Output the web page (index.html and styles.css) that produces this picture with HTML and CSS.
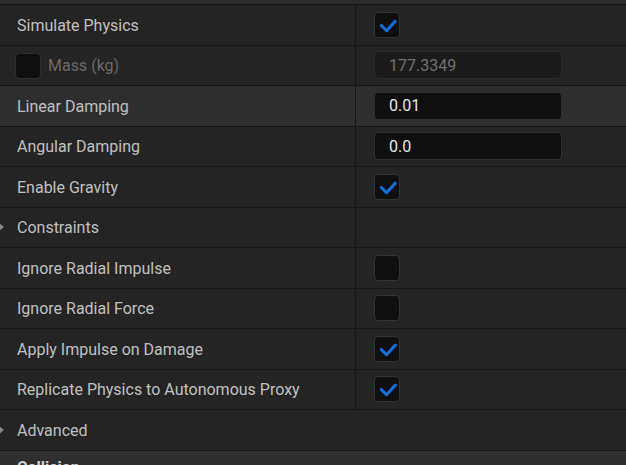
FILE: index.html
```html
<!DOCTYPE html>
<html>
<head>
<meta charset="utf-8">
<link rel="stylesheet" href="styles.css">
</head>
<body>
<div class="panel">
  <div class="topstrip"></div>
  <div class="row">
    <div class="name">Simulate Physics</div>
    <div class="value"><span class="cb checked"><svg viewBox="0 0 25 25"><polyline points="6.5,13 12,18.5 21,8.5"/></svg></span></div>
  </div>
  <div class="row">
    <div class="name disabled"><span class="cb small"></span>Mass (kg)</div>
    <div class="value"><span class="input dim">177.3349</span></div>
  </div>
  <div class="row hover">
    <div class="name">Linear Damping</div>
    <div class="value"><span class="input">0.01</span></div>
  </div>
  <div class="row">
    <div class="name">Angular Damping</div>
    <div class="value"><span class="input">0.0</span></div>
  </div>
  <div class="row">
    <div class="name">Enable Gravity</div>
    <div class="value"><span class="cb checked"><svg viewBox="0 0 25 25"><polyline points="6.5,13 12,18.5 21,8.5"/></svg></span></div>
  </div>
  <div class="row">
    <div class="name"><span class="arrow"></span>Constraints</div>
    <div class="value"></div>
  </div>
  <div class="row">
    <div class="name">Ignore Radial Impulse</div>
    <div class="value"><span class="cb"></span></div>
  </div>
  <div class="row">
    <div class="name">Ignore Radial Force</div>
    <div class="value"><span class="cb"></span></div>
  </div>
  <div class="row">
    <div class="name">Apply Impulse on Damage</div>
    <div class="value"><span class="cb checked"><svg viewBox="0 0 25 25"><polyline points="6.5,13 12,18.5 21,8.5"/></svg></span></div>
  </div>
  <div class="row">
    <div class="name">Replicate Physics to Autonomous Proxy</div>
    <div class="value"><span class="cb checked"><svg viewBox="0 0 25 25"><polyline points="6.5,13 12,18.5 21,8.5"/></svg></span></div>
  </div>
  <div class="row full">
    <div class="name"><span class="arrow"></span>Advanced</div>
  </div>
  <div class="category">Collision</div>
</div>
</body>
</html>
```
FILE: styles.css
```css
html, body {
  margin: 0;
  padding: 0;
  background: #242424;
  overflow: hidden;
}
.panel {
  width: 626px;
  height: 465px;
  overflow: hidden;
  font-family: Roboto, "Liberation Sans", sans-serif;
  font-size: 16px;
  color: #c0c0c0;
}
.topstrip {
  height: 4px;
  background: #2b2b2b;
  border-bottom: 1px solid #151515;
}
.row {
  box-sizing: border-box;
  height: 40.5px;
  display: flex;
  background: #242424;
  border-bottom: 1px solid #171717;
}
.row.hover {
  background: #2e2e2e;
}
.name {
  width: 356px;
  flex: none;
  box-sizing: border-box;
  padding-left: 17px;
  padding-top: 1px;
  display: flex;
  align-items: center;
  position: relative;
  border-right: 1px solid #171717;
}
.row.full .name {
  border-right: none;
}
.name.disabled {
  padding-left: 15px;
  color: #6a6a6a;
}
.value {
  flex: 1;
  display: flex;
  align-items: center;
  padding-left: 18px;
}
.cb {
  box-sizing: border-box;
  width: 26px;
  height: 26px;
  background: #0f0f0f;
  border: 1px solid #333333;
  border-radius: 4px;
  display: inline-flex;
}
.cb svg {
  width: 24px;
  height: 24px;
}
.cb polyline {
  fill: none;
  stroke: #0b70e0;
  stroke-width: 3.2;
  stroke-linecap: round;
  stroke-linejoin: round;
}
.cb.small {
  margin-right: 7px;
  border-color: #2e2e2e;
}
.input {
  box-sizing: border-box;
  width: 188px;
  height: 28px;
  background: #0f0f0f;
  border: 1px solid #303030;
  border-radius: 4px;
  padding-left: 14px;
  display: flex;
  align-items: center;
  color: #e6e6e6;
}
.input.dim {
  background: #1b1b1b;
  border-color: #2a2a2a;
  color: #707070;
}
.arrow {
  position: absolute;
  left: -1px;
  top: 50%;
  margin-top: -4px;
  width: 0;
  height: 0;
  border-top: 4px solid transparent;
  border-bottom: 4px solid transparent;
  border-left: 5px solid #8a8a8a;
}
.category {
  height: 40px;
  background: #2f2f2f;
  padding-left: 17px;
  padding-top: 7px;
  box-sizing: border-box;
  font-weight: bold;
  color: #d0d0d0;
}
```
